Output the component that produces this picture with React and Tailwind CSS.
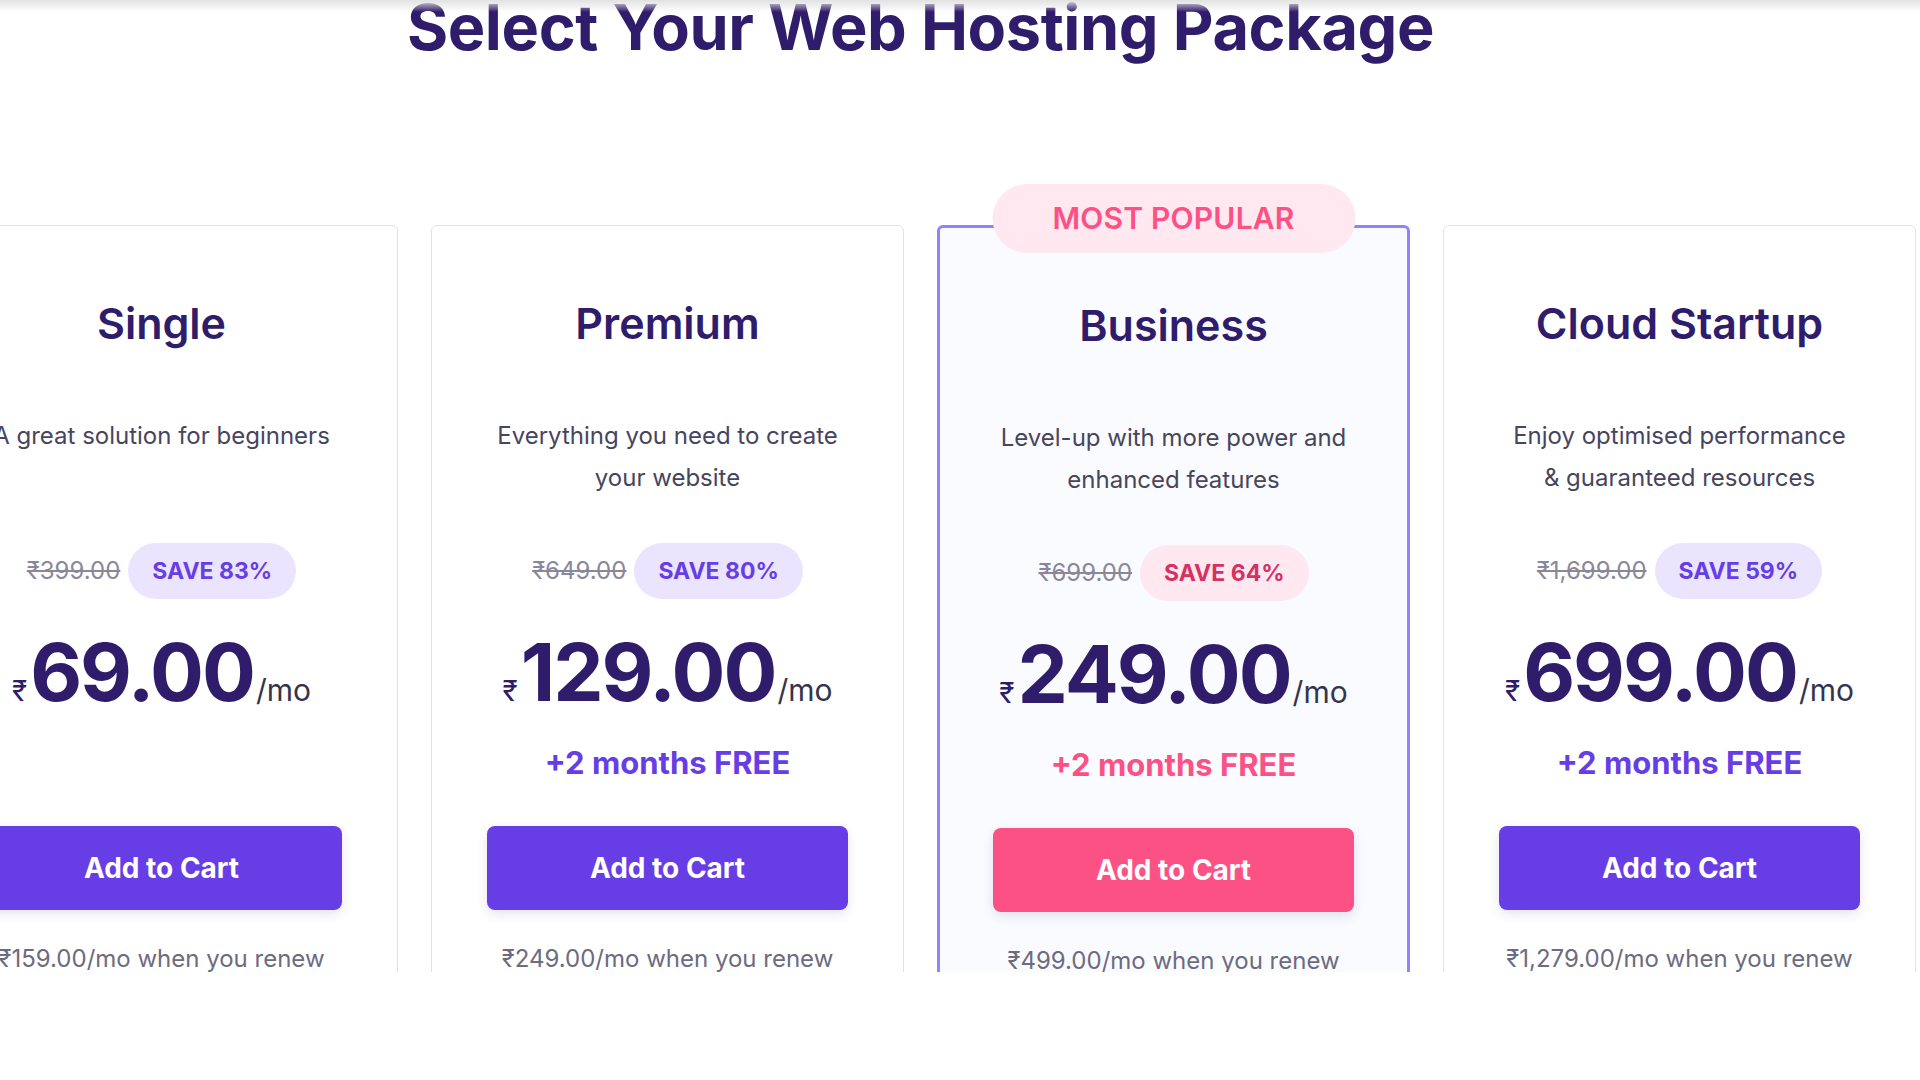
import React from "react";

const plans = [
  {
    name: "Single",
    desc: ["A great solution for beginners"],
    old: "₹399.00",
    save: "SAVE 83%",
    price: "69.00",
    free: false,
    renew: "₹159.00/mo when you renew",
  },
  {
    name: "Premium",
    desc: ["Everything you need to create", "your website"],
    old: "₹649.00",
    save: "SAVE 80%",
    price: "129.00",
    free: true,
    renew: "₹249.00/mo when you renew",
  },
  {
    name: "Business",
    desc: ["Level-up with more power and", "enhanced features"],
    old: "₹699.00",
    save: "SAVE 64%",
    price: "249.00",
    free: true,
    popular: true,
    renew: "₹499.00/mo when you renew",
  },
  {
    name: "Cloud Startup",
    desc: ["Enjoy optimised performance", "& guaranteed resources"],
    old: "₹1,699.00",
    save: "SAVE 59%",
    price: "699.00",
    free: true,
    renew: "₹1,279.00/mo when you renew",
  },
];

function Card({ p }) {
  const pop = p.popular;
  return (
    <div
      className={
        pop
          ? "relative w-[473px] h-[820px] shrink-0 rounded-md border-[3px] border-[#8c85ff] bg-[#fafbff] flex flex-col items-center pt-[72px]"
          : "relative w-[473px] h-[820px] shrink-0 rounded-md border border-[#dfdfff] bg-white flex flex-col items-center pt-[72px]"
      }
    >
      {pop && (
        <div className="absolute left-1/2 -translate-x-1/2 top-[-44px] w-[363px] h-[69px] rounded-full bg-[#ffe8ef] flex items-center justify-center text-[30px] font-semibold text-[#fc5185] tracking-[0.2px]">
          MOST POPULAR
        </div>
      )}
      <div className="h-[50px] leading-[50px] text-[43px] font-semibold text-[#2f1c6a] whitespace-nowrap">
        {p.name}
      </div>
      <div className="mt-[67px] h-[84px] text-center text-[24px] leading-[42px] text-[#47455e] whitespace-nowrap">
        {p.desc.map((l, i) => (
          <div key={i}>{l}</div>
        ))}
      </div>
      <div className="mt-[44px] h-[56px] flex items-center gap-[8px]">
        <span className="text-[24px] text-[#8a8898] line-through">{p.old}</span>
        <span
          className={
            pop
              ? "h-[56px] px-[24px] rounded-full bg-[#ffe8ef] text-[#d63163] text-[23px] font-bold flex items-center"
              : "h-[56px] px-[24px] rounded-full bg-[#ebe4ff] text-[#673de6] text-[23px] font-bold flex items-center"
          }
        >
          {p.save}
        </span>
      </div>
      <div className="mt-[33px] h-[80px] flex items-baseline justify-center text-[#2f1c6a]">
        <span className="text-[28px] leading-[80px] mr-[3px] text-[#2f1c6a]">₹</span>
        <span className="text-[80px] leading-[80px] font-bold tracking-[-2px]">{p.price}</span>
        <span className="text-[30px] leading-[80px] text-[#36344d] ml-[2px]">/mo</span>
      </div>
      <div
        className={
          pop
            ? "mt-[33px] h-[36px] leading-[36px] text-[31px] font-bold text-[#fc5185]"
            : "mt-[33px] h-[36px] leading-[36px] text-[31px] font-bold text-[#673de6]"
        }
      >
        {p.free ? "+2 months FREE" : ""}
      </div>
      <button
        className={
          pop
            ? "mt-[45px] w-[361px] h-[84px] rounded-lg bg-[#fc5185] text-white text-[28px] font-bold shadow-[0_4px_12px_rgba(47,28,106,0.12)]"
            : "mt-[45px] w-[361px] h-[84px] rounded-lg bg-[#673de6] text-white text-[28px] font-bold shadow-[0_4px_12px_rgba(47,28,106,0.12)]"
        }
      >
        Add to Cart
      </button>
      <div className="mt-[34px] h-[30px] leading-[30px] text-[24px] text-[#6d6b80] whitespace-nowrap">
        {p.renew}
      </div>
    </div>
  );
}

export default function App() {
  return (
    <div className="relative w-[1920px] h-[1080px] overflow-hidden bg-white font-['Inter',sans-serif]">
      <div className="absolute inset-x-0 top-0 h-[12px] bg-gradient-to-b from-[#e2e2e2] to-transparent pointer-events-none z-10" />
      <div className="ml-[-75px] w-[1991px] flex flex-col">
        <h1 className="mt-[-4px] h-[63px] leading-[63px] text-center text-[63px] font-bold text-[#2f1c6a] tracking-[-0.4px] whitespace-nowrap">
          Select Your Web Hosting Package
        </h1>
        <div className="h-[913px] overflow-hidden pt-[166px]">
          <div className="flex gap-[33px]">
            {plans.map((p) => (
              <Card key={p.name} p={p} />
            ))}
          </div>
        </div>
      </div>
    </div>
  );
}
